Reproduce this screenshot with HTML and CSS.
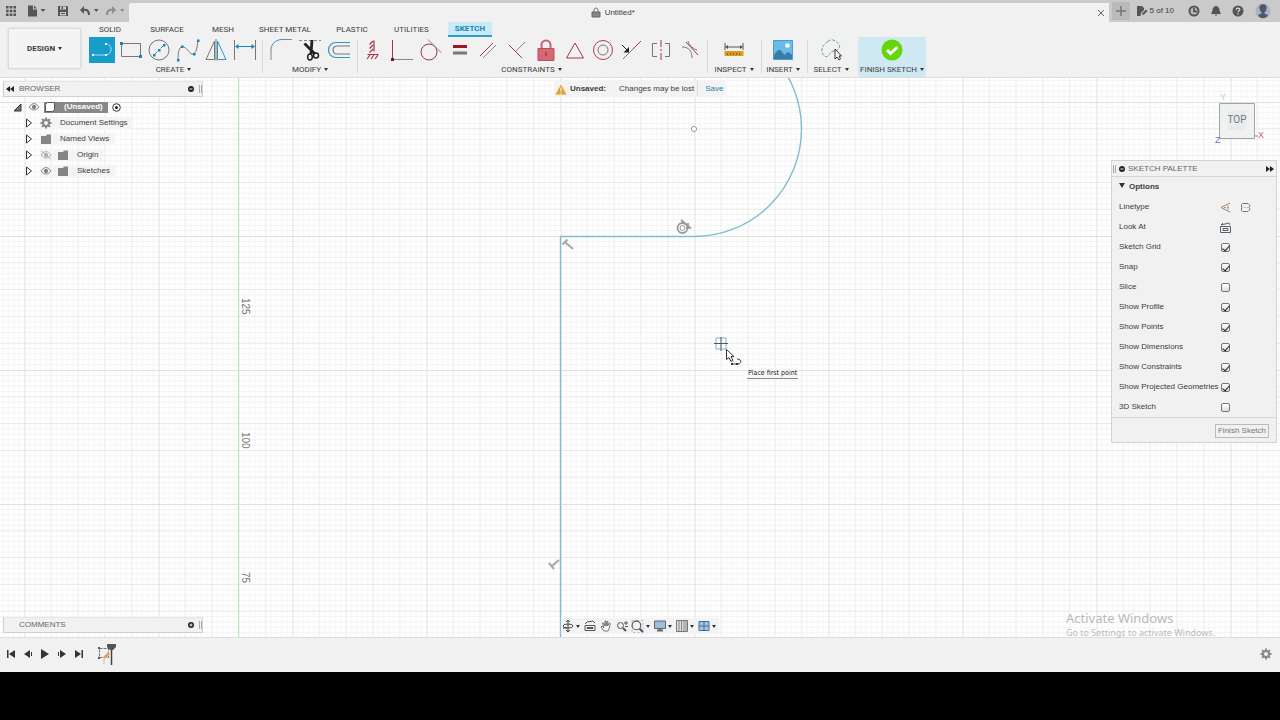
FILE: index.html
```html
<!DOCTYPE html>
<html lang="en">
<head>
<meta charset="utf-8">
<title>Untitled*</title>
<link rel="stylesheet" href="styles.css">
</head>
<body>
<header class="titlebar">
  <div class="quick">
    <button class="ib" aria-label="Data panel"><svg width="12" height="12" viewBox="0 0 12 12" fill="#555"><path d="M1 1h2.6v2.6H1zM4.700 1h2.600v2.600H4.700zM8.400 1H11v2.600H8.400zM1 4.700h2.600v2.600H1zM4.700 4.700h2.600v2.600H4.700zM8.400 4.700H11v2.600H8.400zM1 8.400h2.600V11H1zM4.700 8.400h2.600V11H4.700zM8.400 8.400H11V11H8.400z"/></svg></button>
    <button class="ib file" aria-label="File"><svg width="18" height="12" viewBox="0 0 18 12" fill="#555"><path d="M1 .5h5v4h4V11.500H1zM7 .5L10 3.500H7zM13.500 4h5l-2.500 3z"/></svg></button>
    <button class="ib save" aria-label="Save"><svg width="12" height="12" viewBox="0 0 12 12"><path d="M1 1h9l1 1v9H1z" fill="#555"/><path d="M3 1.500h6v3H3zM3 7h6v3.500H3z" fill="#cacaca"/><path d="M4.500 2h1.500v2H4.500zM4 8h4v1H4z" fill="#555"/></svg></button>
    <button class="ib undo" aria-label="Undo"><svg width="20" height="12" viewBox="0 0 20 12"><path d="M3 5c4-1 6 1 6 5" fill="none" stroke="#555" stroke-width="2"/><path d="M0 5l4-4v8zM14 4h4.500l-2.250 3z" fill="#555"/></svg></button>
    <button class="ib redo" aria-label="Redo"><svg width="20" height="12" viewBox="0 0 20 12"><path d="M7 5C3 4 1 6 1 10" fill="none" stroke="#8d8d8d" stroke-width="2"/><path d="M10 5L6 1v8zM14 4h4.500l-2.250 3z" fill="#8d8d8d"/></svg></button>
  </div>
  <div class="doc-tab">
    <span class="doc-name"><svg width="10" height="11" viewBox="0 0 10 11"><path d="M3 5V3a2 2 0 0 1 4 0v2" fill="none" stroke="#777"/><path d="M1 5h8v5H1z" fill="#888" stroke="#666"/></svg>Untitled*</span>
    <button class="ib" aria-label="Close tab"><svg width="8" height="8" viewBox="0 0 8 8"><path d="M1 1l6 6M7 1L1 7" stroke="#666"/></svg></button>
  </div>
  <div class="account">
    <button class="ib plus" aria-label="New tab"><svg width="10" height="10" viewBox="0 0 10 10"><path d="M5 0v10M0 5h10" stroke="#777" stroke-width="1.500"/></svg></button>
    <button class="ib docs"><svg width="12" height="12" viewBox="0 0 12 12"><path d="M1 1h5l2 2v2L5 8l-.500 3H1z" fill="#555"/><path d="M6 10l.5-2L10 4.500l1.500 1.500L8 9.500z" fill="#555"/></svg>5 of 10</button>
    <button class="ib" aria-label="Job status"><svg width="12" height="12" viewBox="0 0 12 12"><circle cx="6" cy="6" r="4.500" fill="#bbb" stroke="#555" stroke-width="2"/><path d="M6 3v3.500h3" fill="none" stroke="#444" stroke-width="1.500"/></svg></button>
    <button class="ib" aria-label="Notifications"><svg width="12" height="12" viewBox="0 0 12 12" fill="#555"><path d="M6 .5l1 1c2 .5 2.500 2 2.500 4L11 9H1l1.500-3.500c0-2 .5-3.500 2.500-4zM4.500 9.500h3L6 11z"/></svg></button>
    <button class="ib" aria-label="Help"><svg width="12" height="12" viewBox="0 0 12 12"><circle cx="6" cy="6" r="5.500" fill="#555"/><path d="M4.200 4.800C4.200 2.500 8 2.500 7.800 4.700 7.700 5.800 6 5.800 6 7.200M6 8.200v1.300" fill="none" stroke="#ddd" stroke-width="1.200"/></svg></button>
    <button class="ib avatar" aria-label="Profile"><svg width="16" height="16" viewBox="0 0 16 16"><circle cx="8" cy="8" r="7.500" fill="#a9b3c3"/><path d="M8 1.200c3 0 4 2 3.500 4.500S10 9 9.500 9.500v1.300c2 .4 3 .8 3.500 1.800-2.500 3.600-7.500 3.600-10 0 .5-1 1.500-1.400 3.500-1.800V9.500C6 9 5 8 4.500 5.700S5 1.200 8 1.200z" fill="#4b586d"/></svg></button>
  </div>
</header>

<section class="ribbon">
  <button class="workspace">DESIGN<i class="arr"></i></button>
  <div class="ribbon-main">
    <nav class="tabs">
      <button class="t-solid">SOLID</button><button class="t-surface">SURFACE</button><button class="t-mesh">MESH</button><button class="t-sheet">SHEET METAL</button><button class="t-plastic">PLASTIC</button><button class="t-util">UTILITIES</button><button class="t-sketch active">SKETCH</button>
    </nav>
    <div class="groups">
      <div class="group create">
        <div class="tools">
          <button class="on" aria-label="Line"><svg class="ic" viewBox="0 0 24 24" fill="none"><path d="M3 17h12c8 0 8-11 1-11" stroke="#a9e2f5"/><path d="M2 16h2v2H2zM15 16h2v2h-2zM15 5h2v2h-2z" fill="#fff"/></svg></button>
          <button aria-label="Rectangle"><svg class="ic" viewBox="0 0 24 24"><path d="M2.500 5.500h19v13h-19z" fill="none" stroke="#777"/><path d="M1 4h3v3H1zM20 17h3v3h-3z" fill="#1687b4"/></svg></button>
          <button aria-label="Circle"><svg class="ic" viewBox="0 0 24 24"><circle cx="12" cy="12" r="10" fill="none" stroke="#777"/><path d="M7 17L17 7" stroke="#1687b4" stroke-dasharray="4 1"/><path d="M6 16h2.500v2.500H6zM11 11h2.500v2.500H11zM16 6h2.500v2.500H16z" fill="#1687b4"/></svg></button>
          <button aria-label="Spline"><svg class="ic" viewBox="0 0 24 24"><path d="M2 22C2 12 4 7 8 9s6 8 9 7 4-5 5-14" fill="none" stroke="#777"/><path d="M1 21h2.500v2.500H1zM5 7.500h2.500V10H5zM17 15h2.500v2.500H17zM21 1.500h2.500V4H21z" fill="#1687b4"/></svg></button>
          <button aria-label="Mirror"><svg class="ic" viewBox="0 0 24 24" fill="none"><path d="M10.500 3v18.500H2z" stroke="#777"/><path d="M13.500 3v18.500H22z" stroke="#249ac0"/><path d="M12 1v22" stroke="#777"/></svg></button>
          <button aria-label="Dimension"><svg class="ic" viewBox="0 0 24 24"><path d="M1.500 2v20M22.500 2v20" stroke="#777"/><path d="M3 8.500h18" stroke="#1687b4"/><path d="M2 8.500L5.500 6v5zM22 8.500L18.500 6v5z" fill="#1687b4"/></svg></button>
        </div>
        <button class="label">CREATE<i class="arr"></i></button>
      </div>
      <div class="group modify">
        <div class="tools">
          <button aria-label="Fillet"><svg class="ic" viewBox="0 0 24 24" fill="none"><path d="M2 12C2 6 7 1.500 13 1.500" stroke="#249ac0"/><path d="M2 12v10M13 1.500h10" stroke="#888"/></svg></button>
          <button aria-label="Trim"><svg class="ic" viewBox="0 0 24 24" fill="none"><path d="M1 2.500h22" stroke="#888" stroke-dasharray="3 2"/><path d="M6.500 5.500L17 16M14 2l-1 14" stroke="#222" stroke-width="2.800"/><ellipse cx="12" cy="19" rx="2.300" ry="3" stroke="#222" stroke-width="1.500"/><circle cx="18" cy="17.500" r="2.500" stroke="#222" stroke-width="1.500"/></svg></button>
          <button aria-label="Offset"><svg class="ic" viewBox="0 0 24 24" fill="none"><path d="M23 4.500H9a7.500 7.500 0 0 0 0 15h14" stroke="#249ac0" stroke-width="1.200"/><path d="M23 8H10a4 4 0 0 0 0 8h13" stroke="#777" stroke-width="1.200"/></svg></button>
        </div>
        <button class="label">MODIFY<i class="arr"></i></button>
      </div>
      <div class="group constraints">
        <div class="tools">
          <button aria-label="Horizontal/Vertical"><svg class="ic" viewBox="0 0 24 24" fill="none" stroke="#a83242" stroke-width="1.200"><path d="M13 2.500v11M12 3L8.500 6.500M12 7l-3.500 3.500M12 11l-3.500 3.500M6.500 16.500h11M9 17l-3 4M13 17l-3 4M17 17l-3 4"/></svg></button>
          <button aria-label="Coincident"><svg class="ic" viewBox="0 0 24 24" fill="none"><path d="M2.500 2v20" stroke="#a83242"/><path d="M3 21.500h20" stroke="#888"/><path d="M1 20h3v3H1z" fill="#7a1524"/></svg></button>
          <button aria-label="Tangent"><svg class="ic" viewBox="0 0 24 24" fill="none"><circle cx="10" cy="14" r="8" stroke="#a83242"/><path d="M9 1.500L22.500 15" stroke="#888"/></svg></button>
          <button aria-label="Equal"><svg class="ic" viewBox="0 0 24 24"><path d="M5 7h14v3H5z" fill="#a01627"/><path d="M5 13.500h14v3H5z" fill="#777"/></svg></button>
          <button aria-label="Parallel"><svg class="ic" viewBox="0 0 24 24" fill="none"><path d="M4 18L17 5" stroke="#a83242"/><path d="M7 20L20 7" stroke="#888"/></svg></button>
          <button aria-label="Perpendicular"><svg class="ic" viewBox="0 0 24 24" fill="none"><path d="M4 7l13 13" stroke="#a83242"/><path d="M11 13l9-9" stroke="#888"/></svg></button>
          <button aria-label="Fix"><svg class="ic" viewBox="0 0 24 24"><path d="M7.500 11V7a4.500 4.500 0 0 1 9 0v4" fill="none" stroke="#c26670" stroke-width="2"/><path d="M4 10.500h16v12H4z" fill="#d76772" stroke="#b2535d"/><path d="M12 14v4" stroke="#832b37"/></svg></button>
          <button aria-label="Midpoint"><svg class="ic" viewBox="0 0 24 24" fill="none"><path d="M12 5l8.500 15h-17z" stroke="#a83242"/></svg></button>
          <button aria-label="Concentric"><svg class="ic" viewBox="0 0 24 24" fill="none"><circle cx="12" cy="12" r="9.500" stroke="#b03c4b"/><circle cx="12" cy="12" r="5" stroke="#777"/></svg></button>
          <button aria-label="Collinear"><svg class="ic" viewBox="0 0 24 24" fill="none"><path d="M3 21L13 11" stroke="#777"/><path d="M13 11l8-8" stroke="#a83242"/><path d="M2 7l5 5" stroke="#222"/><path d="M9 9v5.500H3.500z" fill="#222"/></svg></button>
          <button aria-label="Symmetry"><svg class="ic" viewBox="0 0 24 24" fill="none"><path d="M8 5.500H3.500v13H8M16 5.500h4.500v13H16" stroke="#777"/><path d="M12 2v20" stroke="#a83242" stroke-dasharray="7 2 2 2"/></svg></button>
          <button aria-label="Curvature"><svg class="ic" viewBox="0 0 24 24" fill="none"><path d="M4 9c7 0 10 4 10 11M10 3c1 5 6 8 9 9" stroke="#777"/><path d="M8 4l12 13" stroke="#a83242"/></svg></button>
        </div>
        <button class="label">CONSTRAINTS<i class="arr"></i></button>
      </div>
      <div class="group inspect">
        <div class="tools"><button aria-label="Measure"><svg class="ic" viewBox="0 0 24 24"><path d="M3 5v7M21 5v7M4 9h16" stroke="#555"/><path d="M3 9l3-2v4zM21 9l-3-2v4z" fill="#555"/><path d="M2.500 13h19v5h-19z" fill="#d99c1a"/><path d="M5.500 15v2M8.500 15v2M11.500 15v2M14.500 15v2M17.500 15v2" stroke="#8c6414"/></svg></button></div>
        <button class="label">INSPECT<i class="arr"></i></button>
      </div>
      <div class="group insert">
        <div class="tools"><button aria-label="Insert image"><svg class="ic" viewBox="0 0 24 24"><path d="M2.500 2.500h19v19h-19z" fill="#69bce8" stroke="#4c9dcb"/><path d="M3 17c2-2 4-6 6-5s3 4 5 5c2-4 4-3 7 0v4H3z" fill="#347ea9"/><circle cx="16.500" cy="7.500" r="2.300" fill="#fff"/></svg></button></div>
        <button class="label">INSERT<i class="arr"></i></button>
      </div>
      <div class="group select">
        <div class="tools"><button aria-label="Select"><svg class="ic" viewBox="0 0 24 24"><path d="M9 3.500c5-5 14 3 11 7s-7 1-9 5-5 4-7 1-2-9 5-13z" fill="none" stroke="#5da779" stroke-dasharray="3 1.500"/><path d="M16 11v10l2-2 2 3 1.500-1-1.500-3h2.500z" fill="#fff" stroke="#333"/></svg></button></div>
        <button class="label">SELECT<i class="arr"></i></button>
      </div>
      <div class="group finish">
        <div class="tools"><button aria-label="Finish"><svg class="ic" viewBox="0 0 24 24"><circle cx="12" cy="12" r="10.500" fill="#62d80b"/><path d="M7 12l3.500 3.500L17.500 9" fill="none" stroke="#fff" stroke-width="3"/></svg></button></div>
        <button class="label">FINISH SKETCH<i class="arr"></i></button>
      </div>
    </div>
  </div>
</section>

<main class="canvas">
  <svg class="scene" width="100%" height="100%">
    <defs>
      <pattern id="grid" width="134" height="134" patternUnits="userSpaceOnUse" patternTransform="translate(24.500 24)">
        <path id="minor" d="M5.360 0v134M10.720 0v134M16.080 0v134M21.440 0v134M32.160 0v134M37.520 0v134M42.880 0v134M48.240 0v134M58.960 0v134M64.320 0v134M69.680 0v134M75.040 0v134M85.760 0v134M91.120 0v134M96.480 0v134M101.840 0v134M112.560 0v134M117.920 0v134M123.280 0v134M128.640 0v134" stroke="#f4f4f4"/>
        <use href="#minor" transform="matrix(0 1 1 0 0 0)"/>
        <path d="M26.800 0v134M53.600 0v134M80.400 0v134M107.200 0v134M0 26.800h134M0 53.600h134M0 80.400h134M0 107.200h134" stroke="#e9e9e9"/>
        <path d="M.5 0v134M0 .5h134" stroke="#e0e0e0"/>
      </pattern>
    </defs>
    <rect width="100%" height="100%" fill="url(#grid)"/>
    <path d="M238.500 0v560" stroke="#b6e6b8" stroke-width="1"/>
    <g class="ruler"><text transform="translate(242 220) rotate(90)">125</text><text transform="translate(242 354) rotate(90)">100</text><text transform="translate(242 494) rotate(90)">75</text></g>
    <path d="M560.500 560V158.500H694A107.500 107.500 0 0 0 694 -56.500" fill="none" stroke="#7fbecb" stroke-width="1.400"/>
    <circle cx="694" cy="51" r="2.600" fill="#fff" stroke="#999"/>
    <g fill="none" stroke="#aaa" stroke-width="2.200"><path d="M562.500 166.500l5-5M565 164l8 7"/><path d="M549 485l5 6M551 489l8-7"/></g>
    <g fill="none" stroke="#9b9b9b"><circle cx="682.500" cy="150" r="5" stroke-width="1.800"/><circle cx="682.500" cy="150" r="2.500"/><path d="M681 142l10 8.500M688 145v5h-2" stroke-width="1.800"/></g>
    <path d="M716 260h10v11h-10z" fill="none" stroke="#79bccb"/><path d="M714 265.500h14M721 259v14" stroke="#555"/>
    <path d="M726.500 271.500v10l2.500-2 2 4 2-1-2-4h3z" fill="#fff" stroke="#333"/><path d="M732 286h6c4 0 4-5-1-5" fill="none" stroke="#444"/><path d="M731 285h2v2h-2zM736 285h2v2h-2z" fill="#333"/>
  </svg>
  <span class="hint">Place first point</span>

  <aside class="browser">
    <div class="bar"><svg width="8" height="6" viewBox="0 0 8 6"><path d="M4 0v6L0 3zM8 0v6L4 3z" fill="#222"/></svg><span class="grow">BROWSER</span><svg width="6" height="6" viewBox="0 0 6 6"><circle cx="3" cy="3" r="3" fill="#222"/><path d="M1.500 3h3" stroke="#eee"/></svg><i class="grip"></i></div>
    <ul class="tree">
      <li class="root"><svg width="9" height="9" viewBox="0 0 9 9"><path d="M8 1v7H1z" fill="#777" stroke="#333"/></svg><svg class="eye" width="12" height="10" viewBox="0 0 12 10"><use href="#eye"/></svg><span class="sel"><svg width="12" height="12" viewBox="0 0 12 12"><path d="M1.500 3.500l2-2h7v7l-2 2h-7z" fill="#fff" stroke="#555"/></svg><b>(Unsaved)</b></span><svg width="9" height="9" viewBox="0 0 9 9"><circle cx="4.500" cy="4.500" r="3.800" fill="#fff" stroke="#333"/><circle cx="4.500" cy="4.500" r="1.500" fill="#222"/></svg></li>
      <li><svg class="tw" viewBox="0 0 8 10"><use href="#tri"/></svg><span class="node"><svg width="12" height="12" viewBox="0 0 12 12"><use href="#gear"/></svg><span>Document Settings</span></span></li>
      <li><svg class="tw" viewBox="0 0 8 10"><use href="#tri"/></svg><span class="node"><svg width="12" height="12" viewBox="0 0 12 12"><use href="#folder"/></svg><span>Named Views</span></span></li>
      <li><svg class="tw" viewBox="0 0 8 10"><use href="#tri"/></svg><span class="node"><svg class="faint" width="12" height="10" viewBox="0 0 12 10"><use href="#eye"/><path d="M1 1l10 8" stroke="#888"/></svg><svg width="12" height="12" viewBox="0 0 12 12"><use href="#folder"/></svg><span class="deep">Origin</span></span></li>
      <li><svg class="tw" viewBox="0 0 8 10"><use href="#tri"/></svg><span class="node"><svg width="12" height="10" viewBox="0 0 12 10"><use href="#eye"/></svg><svg width="12" height="12" viewBox="0 0 12 12"><use href="#folder"/></svg><span class="deep">Sketches</span></span></li>
    </ul>
  </aside>

  <div class="notice"><svg width="12" height="11" viewBox="0 0 12 11"><path d="M6 .5l5.500 10H.5z" fill="#e5a02c"/><path d="M6 3.500v4M6 8.500v1.200" stroke="#fff"/></svg><b>Unsaved:</b><span class="lost">Changes may be lost</span><a href="#">Save</a></div>

  <div class="cube">
    <svg width="52" height="54" viewBox="0 0 52 54"><path d="M7.500 11.500h35v35h-35z" fill="#f0f2f2" stroke="#a4a4a4"/><path d="M16 19h18v19H16z" fill="#e6ecee"/><path d="M43 44h3" stroke="#888"/></svg>
    <span class="face">TOP</span><span class="ax y">Y</span><span class="ax x">X</span><span class="ax z">Z</span>
  </div>

  <aside class="palette">
    <div class="bar"><i class="grip"></i><svg width="6" height="6" viewBox="0 0 6 6"><circle cx="3" cy="3" r="3" fill="#222"/><path d="M1.500 3h3" stroke="#eee"/></svg><span class="grow">SKETCH PALETTE</span><svg width="8" height="6" viewBox="0 0 8 6"><path d="M0 0v6l4-3zM4 0v6l4-3z" fill="#222"/></svg></div>
    <div class="opts">
      <h2><i class="arr"></i>Options</h2>
      <div class="row"><span>Linetype</span><button class="ib" aria-label="Construction"><svg width="11" height="11" viewBox="0 0 11 11" fill="none"><path d="M10 1L1 5.500 10 10" stroke="#888"/><path d="M4 5.500h6M8 3v5" stroke="#db925e" stroke-dasharray="2 1"/></svg></button><button class="ib line2" aria-label="Centerline"><svg width="11" height="11" viewBox="0 0 11 11" fill="none"><path d="M2.500 1.500H8l2 2-1 2 1 2-2 2H2.500l-1-1v-6z" stroke="#777"/><path d="M1 5.500h9" stroke="#bbb" stroke-dasharray="2 1"/></svg></button></div>
      <div class="row"><span>Look At</span><button class="ib" aria-label="Look at"><svg width="11" height="11" viewBox="0 0 11 11" fill="none"><path d="M.5 4.500h10v6H.5zM3 6.500h5v2H3zM1 3l8-2M1 3l2-2M9 1l1 2" stroke="#59636d"/></svg></button></div>
      <label class="row"><span>Sketch Grid</span><input type="checkbox" checked></label>
      <label class="row"><span>Snap</span><input type="checkbox" checked></label>
      <label class="row"><span>Slice</span><input type="checkbox"></label>
      <label class="row"><span>Show Profile</span><input type="checkbox" checked></label>
      <label class="row"><span>Show Points</span><input type="checkbox" checked></label>
      <label class="row"><span>Show Dimensions</span><input type="checkbox" checked></label>
      <label class="row"><span>Show Constraints</span><input type="checkbox" checked></label>
      <label class="row"><span>Show Projected Geometries</span><input type="checkbox" checked></label>
      <label class="row"><span>3D Sketch</span><input type="checkbox"></label>
    </div>
    <div class="foot"><button>Finish Sketch</button></div>
  </aside>

  <aside class="comments"><div class="bar"><span class="grow">COMMENTS</span><svg width="6" height="6" viewBox="0 0 6 6"><circle cx="3" cy="3" r="3" fill="#222"/><path d="M1.500 3h3M3 1.500v3" stroke="#eee"/></svg><i class="grip"></i></div></aside>

  <div class="navbar">
    <button class="ib dd" aria-label="Orbit"><svg width="12" height="12" viewBox="0 0 12 12" fill="none" stroke="#444"><ellipse cx="6" cy="6" rx="5" ry="2"/><path d="M6 0v12M4 2l2-2 2 2M4 10l2 2 2-2M1 8h4"/></svg><i class="arr"></i></button>
    <button class="ib" aria-label="Look at"><svg width="12" height="12" viewBox="0 0 12 12" fill="none" stroke="#555"><path d="M1 5.500h10v5H1zM3 7.500h6v1H3zM1 4l2-2 6-1 2 2"/></svg></button>
    <button class="ib" aria-label="Pan"><svg width="12" height="12" viewBox="0 0 12 12" fill="#fff" stroke="#555" stroke-width=".8"><path d="M4 11L1 7l1-1 2 2L2.500 3h1L5 6V1h1v5l1-4.500h1L7.500 6l2-3 .8.500L9 9l-1 2z"/></svg></button>
    <button class="ib" aria-label="Zoom"><svg width="12" height="12" viewBox="0 0 12 12" fill="none" stroke="#555"><circle cx="4.500" cy="5.500" r="3"/><path d="M7 8l3 3" stroke-width="2"/><path d="M8 3h4M10 1v4M9 6.500h3"/></svg></button>
    <button class="ib dd" aria-label="Fit"><svg width="13" height="13" viewBox="0 0 12 12" fill="none" stroke="#555"><path d="M1 .5h10v11H1z" stroke="#bbb" stroke-dasharray="2"/><circle cx="5" cy="5" r="4"/><path d="M8 8l3 3" stroke-width="2"/></svg><i class="arr"></i></button>
    <button class="ib dd" aria-label="Display settings"><svg width="12" height="12" viewBox="0 0 12 12"><path d="M.5 1h11v7.500H.5z" fill="#9ebbe0" stroke="#666"/><path d="M3 10.500h6M6 9v2" stroke="#666" stroke-width="2"/></svg><i class="arr"></i></button>
    <button class="ib dd" aria-label="Grid settings"><svg width="12" height="12" viewBox="0 0 12 12"><path d="M.5.5h11v11H.5z" fill="#ddd" stroke="#777"/><path d="M3 1v10M5.500 1v10M8 1v10M10 1v10" stroke="#888"/></svg><i class="arr"></i></button>
    <button class="ib dd" aria-label="Viewports"><svg width="12" height="12" viewBox="0 0 12 12"><path d="M1 1.500h10v9H1zM6 1v10M1 6h10" fill="#a6c4e8" stroke="#486a91"/></svg><i class="arr"></i></button>
  </div>

  <div class="watermark"><p class="w1">Activate Windows</p><p>Go to Settings to activate Windows.</p></div>
</main>

<footer class="timeline">
  <button class="ib" aria-label="To start"><svg width="10" height="10" viewBox="0 0 10 10" fill="#333"><path d="M1 1h1.500v8H1zM9 1v8L3 5z"/></svg></button>
  <button class="ib" aria-label="Step back"><svg width="10" height="10" viewBox="0 0 10 10" fill="#333"><path d="M7 1v8L1 5zM8 3h1v4H8z"/></svg></button>
  <button class="ib" aria-label="Play"><svg width="10" height="10" viewBox="0 0 10 10" fill="#333"><path d="M1 0v10l8-5z"/></svg></button>
  <button class="ib" aria-label="Step forward"><svg width="10" height="10" viewBox="0 0 10 10" fill="#333"><path d="M3 1v8l6-4zM1 3h1v4H1z"/></svg></button>
  <button class="ib" aria-label="To end"><svg width="10" height="10" viewBox="0 0 10 10" fill="#333"><path d="M7.500 1H9v8H7.500zM1 1v8l6-4z"/></svg></button>
  <button class="ib feature" aria-label="Sketch1"><svg width="20" height="24" viewBox="0 0 20 24"><path d="M2.500 6.500h9v9h-9z" fill="none" stroke="#6d6d88" stroke-dasharray="3 1"/><path d="M1 5h2v2H1zM11 5h2v2h-2zM1 15h2v2H1z" fill="#557"/><path d="M7 16l5-5" stroke="#e7a64e" stroke-width="2.500"/><path d="M7 17v5" stroke="#bbb"/><path d="M14.500 4v19" stroke="#444" stroke-width="1.500"/><path d="M10 2h9v3l-3 3h-3l-3-3z" fill="#555"/></svg></button>
  <span class="grow"></span>
  <button class="ib" aria-label="Timeline settings"><svg width="12" height="12" viewBox="0 0 12 12"><use href="#gear"/></svg></button>
</footer>
<div class="letterbox"></div>

<svg class="symbols" width="0" height="0" aria-hidden="true"><defs>
  <g id="eye"><path d="M1 5c3-4.500 7-4.500 10 0-3 4-7 4-10 0z" fill="#eee" stroke="#888"/><circle cx="6" cy="5" r="2" fill="#777"/></g>
  <path id="tri" d="M1.500 1v8l5-4z" fill="#fff" stroke="#333"/>
  <path id="folder" d="M1 3h5l1-1.500h4V11H1z" fill="#858585"/>
  <g id="gear"><circle cx="6" cy="6" r="3" fill="none" stroke="#888" stroke-width="2"/><path d="M6 .5v2M6 9.500v2M.5 6h2M9.500 6h2M2.100 2.100l1.500 1.500M8.400 8.400l1.500 1.500M9.900 2.100L8.400 3.600M3.600 8.400L2.100 9.900" stroke="#888" stroke-width="2"/></g>
</defs></svg>
</body>
</html>
```
FILE: styles.css
```css
* { box-sizing: border-box; }
body {
  margin: 0;
  height: 100vh;
  display: flex;
  flex-direction: column;
  overflow: hidden;
  background: #fff;
  color: #3c3c3c;
  font: 8px/12px "Liberation Sans", Arial, sans-serif;
}
button { border: 0; padding: 0; background: none; color: inherit; font: inherit; }
svg { display: block; flex: none; }
p, h2, ul { margin: 0; padding: 0; }
.ib { display: flex; align-items: center; }
.grow { flex: 1; }
.arr {
  display: inline-block;
  margin-left: 3px;
  border: 2px solid transparent;
  border-top: 3px solid #333;
  border-bottom: 0;
  vertical-align: 1px;
}
.symbols { position: absolute; }

.titlebar { display: flex; height: 22px; padding-top: 3px; background: #cacaca; }
.quick { width: 129px; display: flex; align-items: center; padding: 0 0 3px 5px; }
.file { margin-left: 10px; }
.save { margin-left: 12px; }
.undo { margin-left: 11px; }
.redo { margin-left: 6px; }
.doc-tab {
  flex: 1;
  display: flex;
  align-items: center;
  padding-right: 4px;
  background: #f1f1f1;
  border-radius: 2px 0 0 0;
}
.doc-name { flex: 1; display: flex; justify-content: center; align-items: center; gap: 4px; }
.account { display: flex; align-items: center; gap: 10px; padding: 0 9px 3px 3px; }
.plus { width: 18px; height: 18px; justify-content: center; background: #bababa; }
.docs { gap: 2px; margin: 0 4px 0 -4px; }
.avatar { margin-left: 1px; }

.ribbon {
  display: flex;
  height: 56px;
  background: #f1f1f1;
  border-bottom: 1px solid #ddd;
  font-family: "Liberation Sans Narrow", Roboto, sans-serif;
}
.workspace {
  width: 73px;
  height: 41px;
  margin: 6px 7px 0 8px;
  background: #f4f4f4;
  border: 1px solid #dcdcdc;
  border-radius: 2px;
  box-shadow: 0 0 2px #ccc;
  font-weight: 700;
}
.ribbon-main { flex: 1; }
.tabs { display: flex; height: 15px; padding-left: 3px; }
.tabs button { text-align: center; white-space: nowrap; }
.t-solid { width: 38px; }
.t-surface { width: 76px; }
.t-mesh { width: 36px; }
.t-sheet { width: 88px; }
.t-plastic { width: 46px; }
.t-util { width: 73px; }
.tabs .active { width: 44px; background: #c9eaf7; color: #1585b8; border-bottom: 2px solid #2c9ecd; font-weight: 700; }
.groups { display: flex; height: 40px; }
.group { position: relative; display: flex; flex-direction: column; align-items: stretch; margin-right: 7px; }
.group::after { content: ""; position: absolute; right: -4px; top: 3px; bottom: 4px; width: 1px; background: #d8d8d8; }
.tools { display: grid; grid-auto-flow: column; grid-auto-columns: 1fr; height: 26px; }
.tools button { display: grid; place-items: center; }
.tools .on { width: 26px; margin: 0 auto; background: #179ccc; }
.ic { width: 24px; height: 24px; }
.label { height: 13px; text-align: center; white-space: nowrap; }
.create { width: 171px; }
.modify { width: 88px; margin-right: 5px; }
.constraints { width: 345px; margin-right: 6px; }
.inspect { width: 48px; margin-right: 4px; }
.insert { width: 42px; margin-right: 4px; }
.select { width: 46px; margin-right: 4px; }
.finish { width: 68px; background: #cfe9f3; }
.select::after, .finish::after { display: none; }

.canvas { position: relative; flex: 1; min-height: 0; background: #fff; }
.scene { position: absolute; inset: 0; }
.ruler { font-size: 10px; fill: #777; }
.hint {
  position: absolute;
  left: 747px;
  top: 290px;
  padding: 0 1px;
  background: #f7f7f7;
  border-bottom: 1px solid #888;
  font: 7px/10px "DejaVu Sans Condensed", "Noto Sans", sans-serif;
  color: #222;
}
.bar { display: flex; align-items: center; height: 16px; color: #666; background: #f1f1f1; }
.grip { width: 3px; height: 8px; border: 1px solid #aaa; border-width: 0 1px; }
.browser { position: absolute; left: 3px; top: 3px; width: 200px; }
.browser .bar, .comments .bar { gap: 5px; padding-left: 2px; border: 1px solid #d0d0d0; border-top-color: #e6e6e6; }
.tree { list-style: none; padding-top: 2px; }
.tree li { display: flex; align-items: center; height: 16px; padding-left: 22px; }
.tree .root { padding-left: 10px; gap: 4px; }
.root .eye { margin-left: 2px; }
.sel { display: flex; align-items: center; gap: 8px; height: 11px; width: 64px; background: #888; color: #fff; }
.tw { width: 8px; height: 10px; margin-right: 7px; }
.node { display: flex; align-items: center; gap: 5px; height: 12px; padding-right: 5px; background: #f4f4f4; }
.node > span { padding-left: 3px; }
.node > .deep { padding-left: 3px; }
.faint { opacity: .6; }
.comments { position: absolute; left: 3px; bottom: 4px; width: 200px; }
.comments .bar { padding-left: 15px; }

.notice {
  position: absolute;
  left: 50%;
  top: 3px;
  width: 172px;
  height: 16px;
  margin-left: -86px;
  padding: 0 8px 0 1px;
  display: flex;
  align-items: center;
  gap: 3px;
  background: #f3f3f3;
  white-space: nowrap;
}
.lost { flex: 1; padding-left: 10px; }
.notice a { padding-left: 7px; border-left: 1px solid #ddd; color: #2a7da5; text-decoration: none; line-height: 16px; }

.cube { position: absolute; right: 16px; top: 14px; }
.face { position: absolute; left: 0; right: 2px; top: 22px; text-align: center; font: 10px/12px Roboto, sans-serif; color: #777; }
.ax { position: absolute; font-size: 9px; }
.ax.y { left: 8px; top: -1px; color: #9ded9d; }
.ax.x { right: 0; top: 37px; color: #d06377; }
.ax.z { left: 3px; top: 42px; color: #7070d0; }

.palette { position: absolute; right: 3px; top: 82px; width: 166px; background: #f1f1f1; border: 1px solid #d2d2d2; }
.palette .bar { gap: 3px; padding: 0 2px 0 1px; border-bottom: 1px solid #d4d4d4; }
.opts { padding-left: 7px; }
h2 { height: 20px; font-size: 8px; line-height: 20px; }
h2 .arr { margin: 0 4px 0 0; border-width: 5px 3px 0; }
.row { display: flex; align-items: center; height: 20px; }
.row > span { width: 101px; white-space: nowrap; }
.line2 { margin-left: 9px; }
.row input {
  appearance: none;
  width: 9px;
  height: 9px;
  margin: 0 0 0 1px;
  display: grid;
  place-items: center;
  border: 1px solid #777;
  border-radius: 2px;
  background: linear-gradient(#fff, #ddd);
}
.row input:checked::after { content: ""; width: 3px; height: 6px; border: solid #222; border-width: 0 1px 1px 0; transform: rotate(40deg); }
.foot { display: flex; justify-content: flex-end; padding: 6px 7px 4px; border-top: 1px solid #d4d4d4; }
.foot button { width: 54px; height: 14px; border: 1px solid #bbb; color: #777; }

.navbar {
  position: absolute;
  left: 50%;
  bottom: 3px;
  width: 158px;
  height: 16px;
  margin-left: -79px;
  display: flex;
  align-items: center;
  justify-content: space-between;
  background: #f1f3f4;
  padding: 0 3px 0 1px;
}
.dd .arr { margin-left: 2px; }
.watermark { position: absolute; right: 56px; bottom: -2px; width: 158px; color: #bbb; font: 9px/12px "Noto Sans", sans-serif; white-space: nowrap; }
.watermark .w1 { font-size: 13px; line-height: 17px; }

.timeline { display: flex; align-items: center; gap: 7px; height: 35px; padding: 0 8px 3px 6px; background: #f1f1f1; border-top: 1px solid #ddd; }
.feature { margin-left: 6px; }
.letterbox { height: 48px; background: #000; }
```
